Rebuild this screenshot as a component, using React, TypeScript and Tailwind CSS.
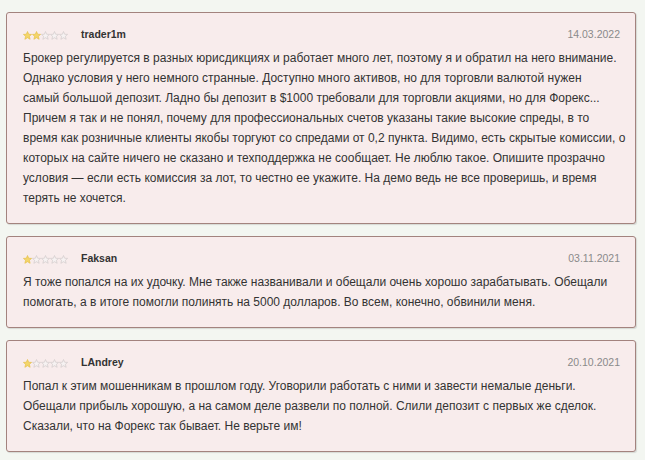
import React from "react";

type Review = { name: string; date: string; rating: number; lines: string[] };

const reviews: Review[] = [
  {
    name: "trader1m",
    date: "14.03.2022",
    rating: 2,
    lines: [
      "Брокер регулируется в разных юрисдикциях и работает много лет, поэтому я и обратил на него внимание.",
      "Однако условия у него немного странные. Доступно много активов, но для торговли валютой нужен",
      "самый большой депозит. Ладно бы депозит в $1000 требовали для торговли акциями, но для Форекс...",
      "Причем я так и не понял, почему для профессиональных счетов указаны такие высокие спреды, в то",
      "время как розничные клиенты якобы торгуют со спредами от 0,2 пункта. Видимо, есть скрытые комиссии, о",
      "которых на сайте ничего не сказано и техподдержка не сообщает. Не люблю такое. Опишите прозрачно",
      "условия — если есть комиссия за лот, то честно ее укажите. На демо ведь не все проверишь, и время",
      "терять не хочется.",
    ],
  },
  {
    name: "Faksan",
    date: "03.11.2021",
    rating: 1,
    lines: [
      "Я тоже попался на их удочку. Мне также названивали и обещали очень хорошо зарабатывать. Обещали",
      "помогать, а в итоге помогли полинять на 5000 долларов. Во всем, конечно, обвинили меня.",
    ],
  },
  {
    name: "LAndrey",
    date: "20.10.2021",
    rating: 1,
    lines: [
      "Попал к этим мошенникам в прошлом году. Уговорили работать с ними и завести немалые деньги.",
      "Обещали прибыль хорошую, а на самом деле развели по полной. Слили депозит с первых же сделок.",
      "Сказали, что на Форекс так бывает. Не верьте им!",
    ],
  },
];

function Star({ filled }: { filled: boolean }) {
  return (
    <svg width="9" height="9" viewBox="0 0 10 10">
      <polygon
        points="5,0.6 6.3,3.6 9.5,3.8 7.1,5.9 7.9,9.2 5,7.4 2.1,9.2 2.9,5.9 0.5,3.8 3.7,3.6"
        fill={filled ? "#f4d66a" : "#f6f2f2"}
        stroke={filled ? "#e6c04a" : "#d2cccc"}
        strokeWidth="0.8"
      />
    </svg>
  );
}

function Card({ r }: { r: Review }) {
  return (
    <div className="w-[630px] rounded-[3px] border border-[#a3837e] bg-[#f8ecec] px-4 pt-3 pb-[15px] shadow-[1px_1px_1px_rgba(0,0,0,0.12)]">
      <div className="flex h-5 items-center">
        <div className="flex">
          {[0, 1, 2, 3, 4].map((i) => (
            <Star key={i} filled={i < r.rating} />
          ))}
        </div>
        <span className="ml-[13px] text-[10.5px] font-bold text-[#333]">{r.name}</span>
        <span className="ml-auto mr-[-1px] text-[10.5px] text-[#8a8a8a]">{r.date}</span>
      </div>
      <div className="mt-[3px] text-[12px] leading-5 text-[#333]">
        {r.lines.map((l, i) => (
          <div key={i} className="whitespace-nowrap">
            {l}
          </div>
        ))}
      </div>
    </div>
  );
}

export default function App() {
  return (
    <div
      className="flex min-h-[460px] w-[645px] flex-col gap-3 bg-[#f3f6f1] pt-3 pl-[6px]"
      style={{ fontFamily: '"Liberation Sans", Arial, sans-serif' }}
    >
      {reviews.map((r) => (
        <Card key={r.name} r={r} />
      ))}
    </div>
  );
}
